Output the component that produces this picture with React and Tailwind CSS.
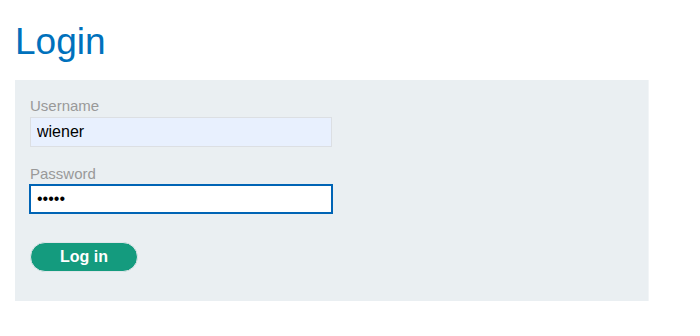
export default function App() {
  return (
    <div className="min-h-[336px] bg-white px-[15px] pt-[19px] font-['Liberation_Sans',Arial,sans-serif]">
      <h1 className="text-[37px] leading-[45px] text-[#0071bc]">Login</h1>
      <form
        className="mt-[16px] w-[634px] border-r border-[#f2f5f7] bg-[#eaeff2] px-[15px] pt-[16px] pb-[29px]"
        onSubmit={(e) => e.preventDefault()}
      >
        <label className="block text-[15px] leading-[20px] text-[#999]">Username</label>
        <input
          type="text"
          defaultValue="wiener"
          className="mt-[1px] block h-[30px] w-[302px] border border-[#dcdfe3] bg-[#e8f0fe] px-[6px] text-[16px] text-black outline-none"
        />
        <label className="mt-[17px] block text-[15px] leading-[20px] text-[#999]">Password</label>
        <input
          type="password"
          defaultValue="peter"
          className="block h-[30px] w-[304px] -ml-px border-2 border-[#0064b5] bg-white px-[6px] text-[16px] text-black outline-none"
        />
        <button
          type="submit"
          className="mt-[28px] block h-[30px] w-[108px] rounded-full border border-[#e0e6ea] bg-[#149b7e] text-[16px] font-bold text-white"
        >
          Log in
        </button>
      </form>
    </div>
  )
}
